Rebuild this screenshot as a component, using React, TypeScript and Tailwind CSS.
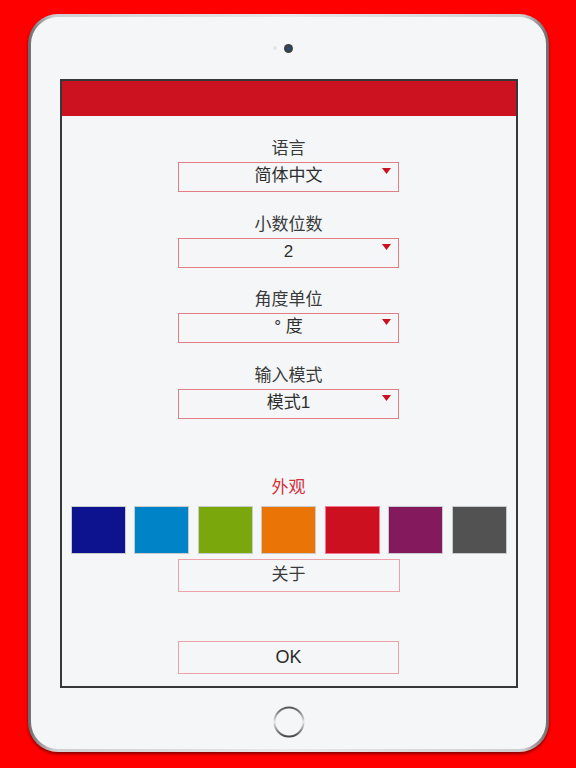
const swatches = ['#0d138f', '#0084c7', '#7aa70c', '#ea7406', '#cc101f', '#84195e', '#525252'];

const settings = [
  { label: '语言', value: '简体中文' },
  { label: '小数位数', value: '2' },
  { label: '角度单位', value: '° 度' },
  { label: '输入模式', value: '模式1' },
];

const font = "font-['Liberation_Sans','Noto_Sans_CJK_SC',sans-serif]";

function Select({ label, value, first }: { label: string; value: string; first?: boolean }) {
  return (
    <div className={`flex flex-col items-center ${first ? '' : 'mt-[22.5px]'}`}>
      <div className="text-[17px] leading-[20px] text-[#3a3a3a]">{label}</div>
      <div className="relative mt-[3px] h-[30px] w-[221px] border border-[#e27c85] text-center text-[17px] leading-[26px] text-[#2e2e2e]">
        {value}
        <svg className="absolute right-[7px] top-[5px]" width="9" height="6" viewBox="0 0 9 6">
          <path d="M0 0 H9 L4.5 6 Z" fill="#cc101f" />
        </svg>
      </div>
    </div>
  );
}

export default function App() {
  return (
    <div className={`h-[768px] w-[576px] bg-[#ff0000] pl-[28px] pt-[14px] ${font}`}>
      {/* device frame */}
      <div className="h-[738px] w-[521px] rounded-[30px] bg-[linear-gradient(to_right,#6a6a6e_0%,#cfcfd2_5%,#e8e8ea_50%,#cfcfd2_95%,#6a6a6e_100%)] p-[3px] shadow-[0_2px_3px_rgba(60,0,0,0.6)]">
        <div className="flex h-full w-full flex-col items-center rounded-[27px] bg-[#f5f6f8]">
          {/* camera */}
          <div className="flex h-[62px] items-center gap-[7px]">
            <span className="h-[4px] w-[4px] rounded-full bg-[#e4e5e8]" />
            <span className="flex h-[9px] w-[9px] items-center justify-center rounded-full bg-[#3c3f44]">
              <span className="h-[3px] w-[3px] rounded-full bg-[#1d4f9c]" />
            </span>
            <span className="w-[4px]" />
          </div>

          {/* screen */}
          <div className="flex h-[609px] w-[458px] flex-col items-center border-2 border-[#383838] bg-[#f4f6f7]">
            <div className="h-[35px] w-full bg-[#cc1120]" />

            <div className="flex flex-col items-center pt-[23px]">
              {settings.map((s, i) => (
                <Select key={s.label} label={s.label} value={s.value} first={i === 0} />
              ))}
            </div>

            <div className="mt-[59px] text-[17px] leading-[20px] text-[#d6313d]">外观</div>

            <div className="mt-[8px] flex gap-[8.5px]">
              {swatches.map((c, i) => (
                <div
                  key={c}
                  className={`h-[48px] w-[55px] border ${i === 4 ? 'border-[#f07a96]' : 'border-[#c8cacc]'}`}
                  style={{ backgroundColor: c }}
                />
              ))}
            </div>

            <div className="mt-[5px] flex h-[33px] w-[222px] items-center justify-center border border-[#eba3a9] text-[17px] text-[#3a3a3a]">
              关于
            </div>

            <div className="mt-[49px] flex h-[33px] w-[221px] items-center justify-center border border-[#eba3a9] text-[18px] text-[#2a2a2a]">
              OK
            </div>
          </div>

          {/* home button */}
          <div className="flex flex-1 items-start pt-[18px]">
            <svg width="32" height="32" viewBox="0 0 32 32">
              <defs>
                <linearGradient id="hb" x1="0" y1="0" x2="0" y2="1">
                  <stop offset="0" stopColor="#55565a" />
                  <stop offset="0.5" stopColor="#e8e8ea" />
                  <stop offset="1" stopColor="#45464a" />
                </linearGradient>
              </defs>
              <circle cx="16" cy="16" r="14.5" fill="#f5f6f8" stroke="url(#hb)" strokeWidth="2" />
            </svg>
          </div>
        </div>
      </div>
    </div>
  );
}
